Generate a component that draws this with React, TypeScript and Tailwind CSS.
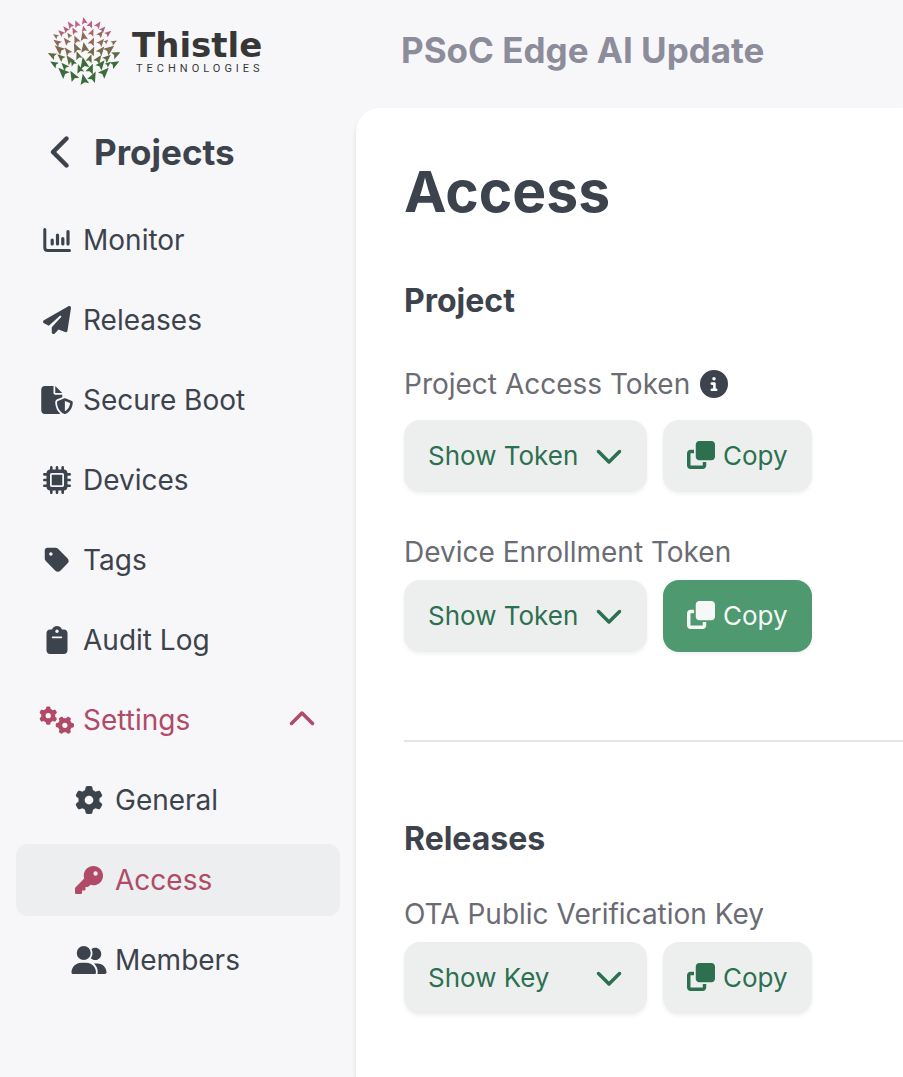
import type { ReactNode } from "react";
import type { IconType } from "react-icons";
import {
  FaChevronDown,
  FaChevronLeft,
  FaChevronUp,
  FaCircleInfo,
  FaClipboard,
  FaClone,
  FaFileShield,
  FaGear,
  FaGears,
  FaKey,
  FaMicrochip,
  FaPaperPlane,
  FaTag,
  FaUserGroup,
} from "react-icons/fa6";

// x, y, size of each leaf of the thistle head
const leaves: [number, number, number][] = [
  [162, 63, 18], [140, 72, 18], [120, 75, 18], [182, 73, 18], [205, 75, 18],
  [107, 88, 17], [132, 93, 17], [161, 87, 15], [186, 98, 18], [219, 88, 16],
  [93, 99, 17], [77, 108, 14], [117, 106, 14], [212, 102, 18], [235, 100, 17],
  [160, 109, 22], [138, 119, 20], [109, 124, 19], [81, 128, 20], [187, 125, 20], [214, 127, 20], [229, 125, 12], [252, 127, 15],
  [87, 148, 25], [112, 154, 20], [138, 144, 24], [163, 143, 25], [187, 154, 22], [214, 152, 22], [239, 149, 26],
  [66, 166, 21], [92, 172, 20], [118, 179, 23], [144, 167, 20], [180, 176, 20], [206, 178, 22], [232, 174, 21], [259, 163, 22],
  [72, 192, 20], [103, 199, 20], [128, 187, 18], [161, 190, 28], [148, 207, 22], [183, 207, 24], [214, 194, 24], [235, 192, 15], [255, 192, 22],
  [98, 217, 28], [129, 228, 26], [161, 239, 26], [190, 231, 26], [224, 217, 27],
];

function leafColor(y: number) {
  if (y < 80) return "#bd6088";
  if (y < 102) return "#ae6374";
  if (y < 130) return "#8f6a5b";
  if (y < 160) return "#7b6a4e";
  if (y < 182) return "#5f6a43";
  return "#3b6c3a";
}

function ThistleLogo() {
  return (
    <a href="#home" className="flex h-[72px] items-center gap-3 pl-8" aria-label="Thistle Technologies">
      <svg viewBox="54 42 216 216" className="size-[72px] shrink-0" aria-hidden="true">
        {leaves.map(([x, y, size]) => (
          <path
            key={`${x}-${y}`}
            d={x < 165 ? "M-.1 -.68 L.62 .42 L.12 .3 L-.36 .62 Z" : "M.1 -.68 L.36 .62 L-.12 .3 L-.62 .42 Z"}
            fill={leafColor(y)}
            transform={`translate(${x} ${y}) rotate(${(x - 162) * 0.54}) scale(${size})`}
          />
        ))}
      </svg>
      <span className="flex flex-col pt-1.5 text-[#373737]">
        <span className="font-['DejaVu_Sans',sans-serif] text-[34px] leading-8 font-bold">Thistle</span>
        <span className="pl-1 font-['Roboto',sans-serif] text-[11px] leading-4 tracking-[4px]">TECHNOLOGIES</span>
      </span>
    </a>
  );
}

function MonitorIcon() {
  return (
    <svg viewBox="0 0 28 28" className="size-7" fill="none" stroke="currentColor" strokeWidth="3" strokeLinecap="round" aria-hidden="true">
      <path d="M1.8 3.500v18q0 3 3 3h21.700" />
      <path d="M9.200 14v4M14.500 9v9M19.800 12.500v5.500M25 5.500v12.500" strokeWidth="3.200" />
    </svg>
  );
}

type NavItemProps = { label: string; icon: ReactNode; active?: boolean; nested?: boolean; accent?: boolean };

function NavItem({ label, icon, active, nested, accent }: NavItemProps) {
  return (
    <li>
      <a
        href={`#${label.toLowerCase().replace(" ", "-")}`}
        aria-current={active ? "page" : undefined}
        className={`flex h-[72px] items-center gap-[9px] rounded-xl pr-6 ${nested ? "pl-14" : "pl-6"} ${active ? "bg-[#eceef0]" : ""} ${accent || active ? "text-[#b14a66]" : "text-[#3d434c]"}`}
      >
        <span className="flex w-[34px] shrink-0 justify-center">{icon}</span>
        <span className="grow">{label}</span>
        {accent ? <FaChevronUp className="size-7" /> : null}
      </a>
    </li>
  );
}

const mainItems: { label: string; Icon: IconType; wide?: boolean }[] = [
  { label: "Releases", Icon: FaPaperPlane },
  { label: "Secure Boot", Icon: FaFileShield, wide: true },
  { label: "Devices", Icon: FaMicrochip },
  { label: "Tags", Icon: FaTag },
  { label: "Audit Log", Icon: FaClipboard },
];

function Sidebar() {
  return (
    <aside className="w-[356px] shrink-0 px-4 pt-[14px]">
      <ThistleLogo />
      <a href="#projects" className="mt-[30px] flex h-[72px] items-center gap-[14px] pl-7 text-[35px] font-bold text-[#3d434c]">
        <FaChevronLeft className="size-9" />
        Projects
      </a>
      <nav className="mt-4 text-[28px]">
        <ul className="flex flex-col gap-2">
          <NavItem label="Monitor" icon={<MonitorIcon />} />
          {mainItems.map(({ label, Icon, wide }) => (
            <NavItem key={label} label={label} icon={<Icon className={wide ? "h-7 w-8 shrink-0" : "size-7"} />} />
          ))}
          <NavItem label="Settings" icon={<FaGears className="h-7 w-9 shrink-0" />} accent />
          <NavItem label="General" icon={<FaGear className="size-7" />} nested />
          <NavItem label="Access" icon={<FaKey className="size-7" />} nested active />
          <NavItem label="Members" icon={<FaUserGroup className="h-7 w-9 shrink-0" />} nested />
        </ul>
      </nav>
    </aside>
  );
}

function SecretField({ label, action, info, highlighted }: { label: string; action: string; info?: boolean; highlighted?: boolean }) {
  return (
    <div role="group" aria-label={label}>
      <div className="flex h-10 items-center gap-[10px] text-[28px] text-[#6a6b73]">
        <span>{label}</span>
        {info ? <FaCircleInfo className="size-7 text-[#3d434c]" /> : null}
      </div>
      <div className={`flex gap-4 text-[26px] ${info ? "mt-4" : "mt-2"}`}>
        <button type="button" className="flex h-[72px] w-[243px] items-center justify-between rounded-2xl bg-[#edefef] px-6 pb-0.5 text-[#2c704f] shadow-[0_2px_4px_rgba(0,0,0,0.06)]">
          {action}
          <FaChevronDown className="size-7" />
        </button>
        <button
          type="button"
          className={`flex h-[72px] items-center gap-2 rounded-2xl px-6 pb-0.5 shadow-[0_2px_4px_rgba(0,0,0,0.06)] ${highlighted ? "bg-[#4f9970] text-[#f6f8f7]" : "bg-[#edefef] text-[#2c704f]"}`}
        >
          <FaClone className="size-7" />
          Copy
        </button>
      </div>
    </div>
  );
}

export default function App() {
  return (
    <div className="flex min-h-screen overflow-hidden bg-[#f7f7fa] font-['Inter',sans-serif]">
      <Sidebar />
      <div className="flex min-w-0 grow flex-col">
        <header className="flex h-[108px] items-center pb-2 pl-[45px] text-[35px] font-bold text-[#8d8c9b]">PSoC Edge AI Update</header>
        <main className="grow rounded-tl-3xl bg-white pt-12 pl-12 shadow-md">
          <h1 className="text-[57px] leading-[72px] font-bold text-[#3d434c]">Access</h1>
          <section>
            <h2 className="mt-[53px] mb-[43px] text-[32px] leading-10 font-bold text-[#3d434c]">Project</h2>
            <SecretField label="Project Access Token" action="Show Token" info />
            <div className="mt-10">
              <SecretField label="Device Enrollment Token" action="Show Token" highlighted />
            </div>
          </section>
          <hr className="mt-[88px] border-t-2 border-[#e4e5e7]" />
          <section>
            <h2 className="mt-[77px] mb-[35px] text-[32px] leading-10 font-bold text-[#3d434c]">Releases</h2>
            <SecretField label="OTA Public Verification Key" action="Show Key" />
          </section>
        </main>
      </div>
    </div>
  );
}
